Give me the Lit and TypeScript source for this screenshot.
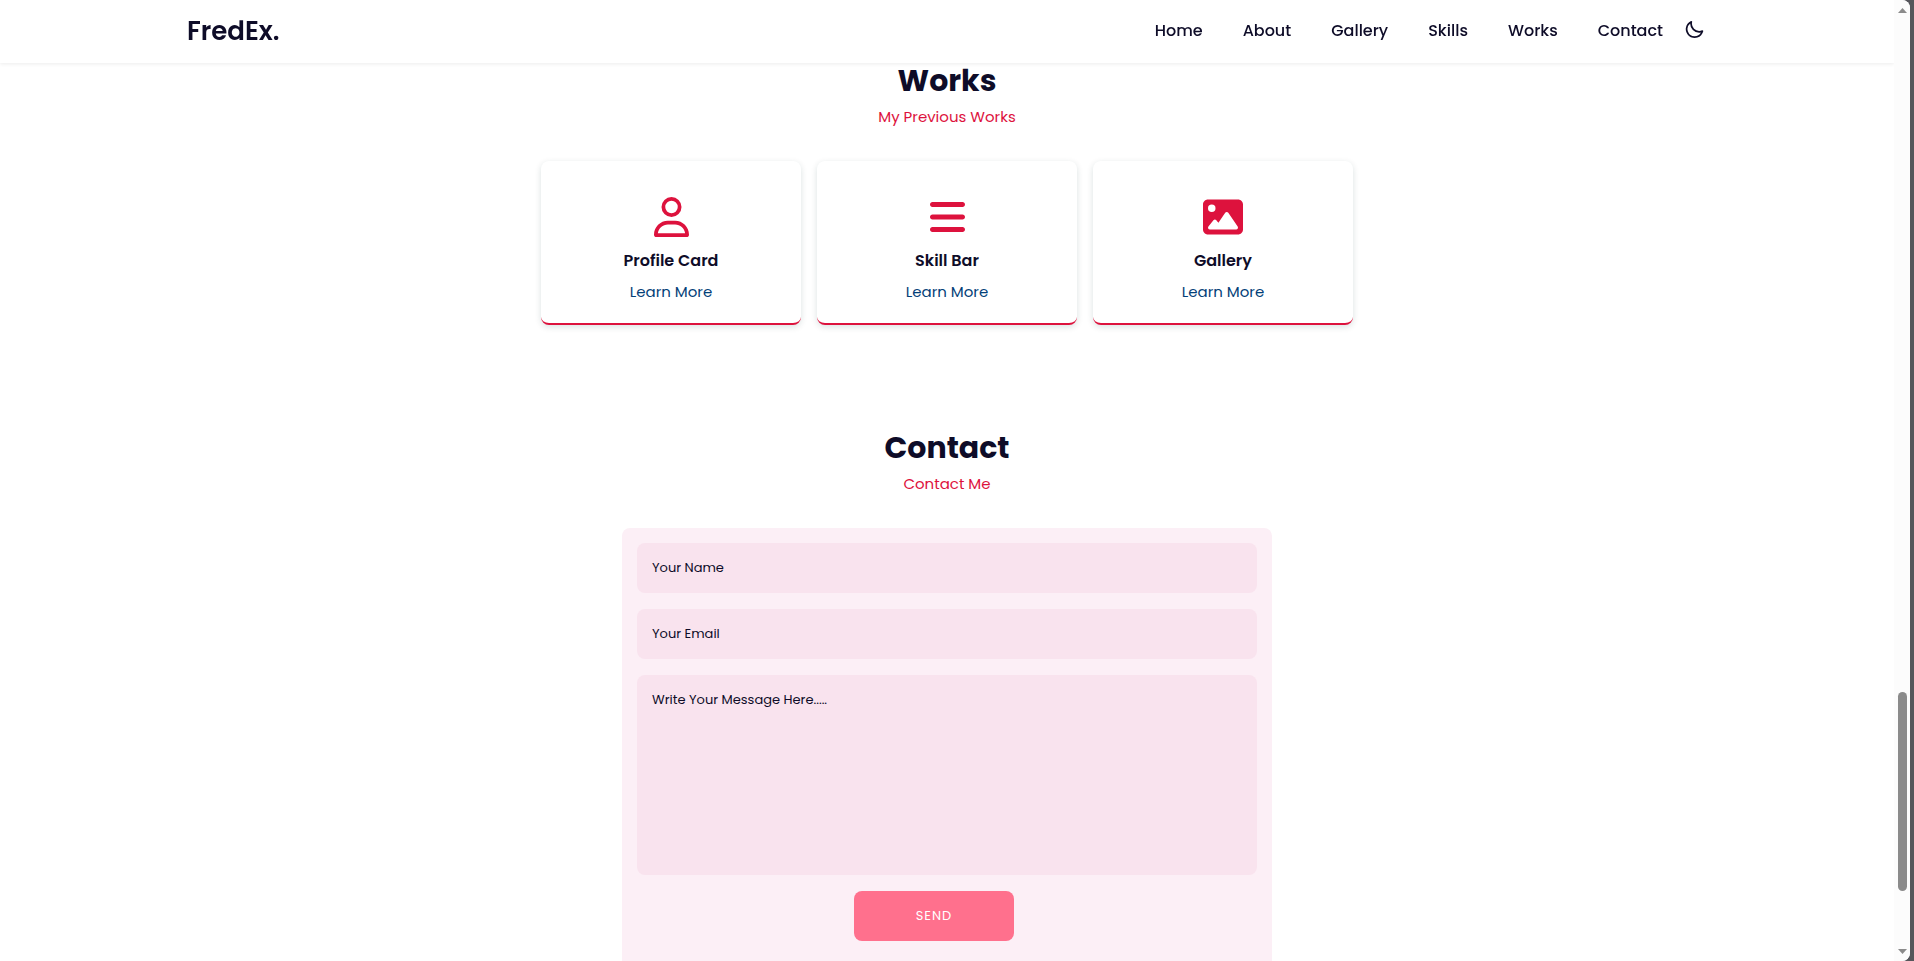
import { LitElement, html, css, svg } from "lit";
import { customElement } from "lit/decorators.js";

const NAV = ["Home", "About", "Gallery", "Skills", "Works", "Contact"];

const WORKS = [
  {
    title: "Profile Card",
    icon: svg`<svg class="icon" viewBox="0 0 448 512" aria-hidden="true"><path d="M304 128a80 80 0 1 0 -160 0 80 80 0 1 0 160 0zM96 128a128 128 0 1 1 256 0A128 128 0 1 1 96 128zM49.3 464H398.7c-8.9-63.3-63.3-112-129-112H178.3c-65.7 0-120.1 48.7-129 112zM0 482.3C0 383.8 79.8 304 178.3 304h91.4C368.2 304 448 383.8 448 482.3c0 16.4-13.3 29.7-29.7 29.7H29.7C13.3 512 0 498.7 0 482.3z"/></svg>`,
  },
  {
    title: "Skill Bar",
    icon: svg`<svg class="icon" viewBox="0 0 448 512" aria-hidden="true"><path d="M0 96C0 78.3 14.3 64 32 64H416c17.7 0 32 14.3 32 32s-14.3 32-32 32H32C14.3 128 0 113.7 0 96zM0 256c0-17.7 14.3-32 32-32H416c17.7 0 32 14.3 32 32s-14.3 32-32 32H32c-17.7 0-32-14.3-32-32zM448 416c0 17.7-14.3 32-32 32H32c-17.7 0-32-14.3-32-32s14.3-32 32-32H416c17.7 0 32 14.3 32 32z"/></svg>`,
  },
  {
    title: "Gallery",
    icon: svg`<svg class="icon" viewBox="0 0 512 512" aria-hidden="true"><path d="M0 96C0 60.7 28.7 32 64 32H448c35.3 0 64 28.7 64 64V416c0 35.3-28.7 64-64 64H64c-35.3 0-64-28.7-64-64V96zM323.8 202.5c-4.5-6.6-11.9-10.5-19.8-10.5s-15.4 3.9-19.8 10.5l-87 127.6L170.7 297c-4.6-5.7-11.5-9-18.7-9s-14.2 3.3-18.7 9l-64 80c-5.8 7.2-6.9 17.1-2.9 25.4s12.4 13.6 21.6 13.6h96 32H424c8.9 0 17.1-4.9 21.2-12.8s3.6-17.4-1.4-24.7l-120-176zM112 192a48 48 0 1 0 0-96 48 48 0 1 0 0 96z"/></svg>`,
  },
];

@customElement("app-root")
export class AppRoot extends LitElement {
  static styles = css`
    :host {
      display: block;
      height: 100vh;
      background: #56565b;
      color: #0e0c28;
      font-family: Poppins, Inter, sans-serif;
      font-size: 16px;
      line-height: 24px;
    }
    * { box-sizing: border-box; }
    h1, h2, h3, p { margin: 0; }
    a { color: inherit; text-decoration: none; }

    .window {
      display: grid;
      grid-template-columns: minmax(0, 1fr) 16px;
      height: 100%;
      margin-right: 4px;
      background: #fff;
      border-radius: 0 8px 8px 0;
      overflow: hidden;
    }
    .page { height: 100%; min-height: 0; overflow: hidden; }

    .header {
      position: sticky;
      top: 0;
      z-index: 1;
      background: #fff;
      box-shadow: 0 1px 4px rgba(0, 0, 0, 0.08);
    }
    .bar {
      display: flex;
      align-items: center;
      justify-content: space-between;
      max-width: 1520px;
      height: 63px;
      padding-bottom: 2px;
      margin: 0 auto;
    }
    .logo { font-size: 26px; font-weight: 600; }
    .menu { display: flex; align-items: center; gap: 21px; }
    .links {
      display: flex;
      gap: 40px;
      margin: 0;
      padding: 0;
      list-style: none;
      font-weight: 500;
    }
    .theme {
      display: flex;
      padding: 0 2px 2px 0;
      border: 0;
      background: none;
      color: inherit;
      cursor: pointer;
    }
    .moon { width: 21px; height: 21px; fill: currentColor; }

    .section { display: flex; flex-direction: column; align-items: center; }
    .contact { margin-top: 105px; }
    .title { font-size: 30px; line-height: 36px; font-weight: 700; }
    .subtitle { margin: 6px 0 32px; color: #dd123d; font-size: 15px; }

    .cards { display: grid; grid-template-columns: repeat(3, 260px); gap: 16px; }
    .card {
      display: flex;
      flex-direction: column;
      align-items: center;
      padding: 36px 16px 19px;
      border-bottom: 2px solid #dd123d;
      border-radius: 8px;
      background: #fff;
      box-shadow: 0 2px 6px rgba(14, 55, 54, 0.15);
    }
    .icon { height: 40px; fill: #dd123d; }
    .name { margin: 12px 0 7px; font-size: 16px; font-weight: 600; }
    .more { color: #034078; font-size: 15px; }

    .form {
      display: flex;
      flex-direction: column;
      gap: 16px;
      width: 100%;
      max-width: 650px;
      padding: 15px 15px 32px;
      border-radius: 8px;
      background: #fceff6;
    }
    .field {
      display: block;
      width: 100%;
      height: 50px;
      padding: 15px;
      border: 0;
      border-radius: 8px;
      outline: 0;
      background: #f9e3ee;
      color: inherit;
      font: 400 13px/20px Poppins, Inter, sans-serif;
    }
    .field::placeholder { color: #0e0c28; opacity: 1; }
    .message { height: 200px; resize: none; }
    .send {
      align-self: center;
      width: 160px;
      height: 50px;
      margin-right: 26px;
      border: 0;
      border-radius: 8px;
      background: #ff708d;
      color: #fff;
      font: 400 13px/20px Poppins, Inter, sans-serif;
      letter-spacing: 1px;
      cursor: pointer;
    }

    .scrollbar {
      display: flex;
      flex-direction: column;
      align-items: center;
      padding: 8px 0 7px 1px;
      background: #fcfcfc;
    }
    .arrow { width: 9px; height: 5px; fill: #8b8b8b; }
    .track { flex: 1; display: flex; flex-direction: column; }
    .before { flex: 679; }
    .thumb { flex: 199; width: 9px; border-radius: 5px; background: #8b8b8b; }
    .after { flex: 58; }
  `;

  render() {
    return html`
      <div class="window">
        <div class="page">
          <header class="header">
            <div class="bar">
              <a class="logo" href="#home">FredEx.</a>
              <nav class="menu">
                <ul class="links">
                  ${NAV.map((n) => html`<li><a href="#${n.toLowerCase()}">${n}</a></li>`)}
                </ul>
                <button class="theme" type="button" aria-label="Toggle dark theme">
                  <svg class="moon" viewBox="0 0 24 24"><path d="M21.64,13a1,1,0,0,0-1.05-.14,8.05,8.05,0,0,1-3.37.73A8.15,8.15,0,0,1,9.08,5.49a8.59,8.59,0,0,1,.25-2A1,1,0,0,0,8,2.36,10.14,10.14,0,1,0,22,14.05,1,1,0,0,0,21.64,13Zm-9.5,6.69A8.14,8.14,0,0,1,7.08,5.22v.27A10.15,10.15,0,0,0,17.22,15.63a9.79,9.79,0,0,0,2.1-.22A8.11,8.11,0,0,1,12.14,19.73Z"/></svg>
                </button>
              </nav>
            </div>
          </header>
          <main>
            <section class="section" id="works">
              <h2 class="title">Works</h2>
              <p class="subtitle">My Previous Works</p>
              <div class="cards">
                ${WORKS.map(
                  (w) => html`<article class="card">
                    ${w.icon}
                    <h3 class="name">${w.title}</h3>
                    <a class="more" href="#works">Learn More</a>
                  </article>`
                )}
              </div>
            </section>
            <section class="section contact" id="contact">
              <h2 class="title">Contact</h2>
              <p class="subtitle">Contact Me</p>
              <form class="form">
                <input class="field" type="text" aria-label="Your Name" placeholder="Your Name" />
                <input class="field" type="email" aria-label="Your Email" placeholder="Your Email" />
                <textarea class="field message" aria-label="Message" placeholder="Write Your Message Here....."></textarea>
                <button class="send" type="button">SEND</button>
              </form>
            </section>
          </main>
        </div>
        <div class="scrollbar" aria-hidden="true">
          <svg class="arrow" viewBox="0 0 9 5"><path d="M0 5L4.5 0L9 5z"/></svg>
          <div class="track">
            <div class="before"></div>
            <div class="thumb"></div>
            <div class="after"></div>
          </div>
          <svg class="arrow" viewBox="0 0 9 5"><path d="M0 0L4.5 5L9 0z"/></svg>
        </div>
      </div>
    `;
  }
}
